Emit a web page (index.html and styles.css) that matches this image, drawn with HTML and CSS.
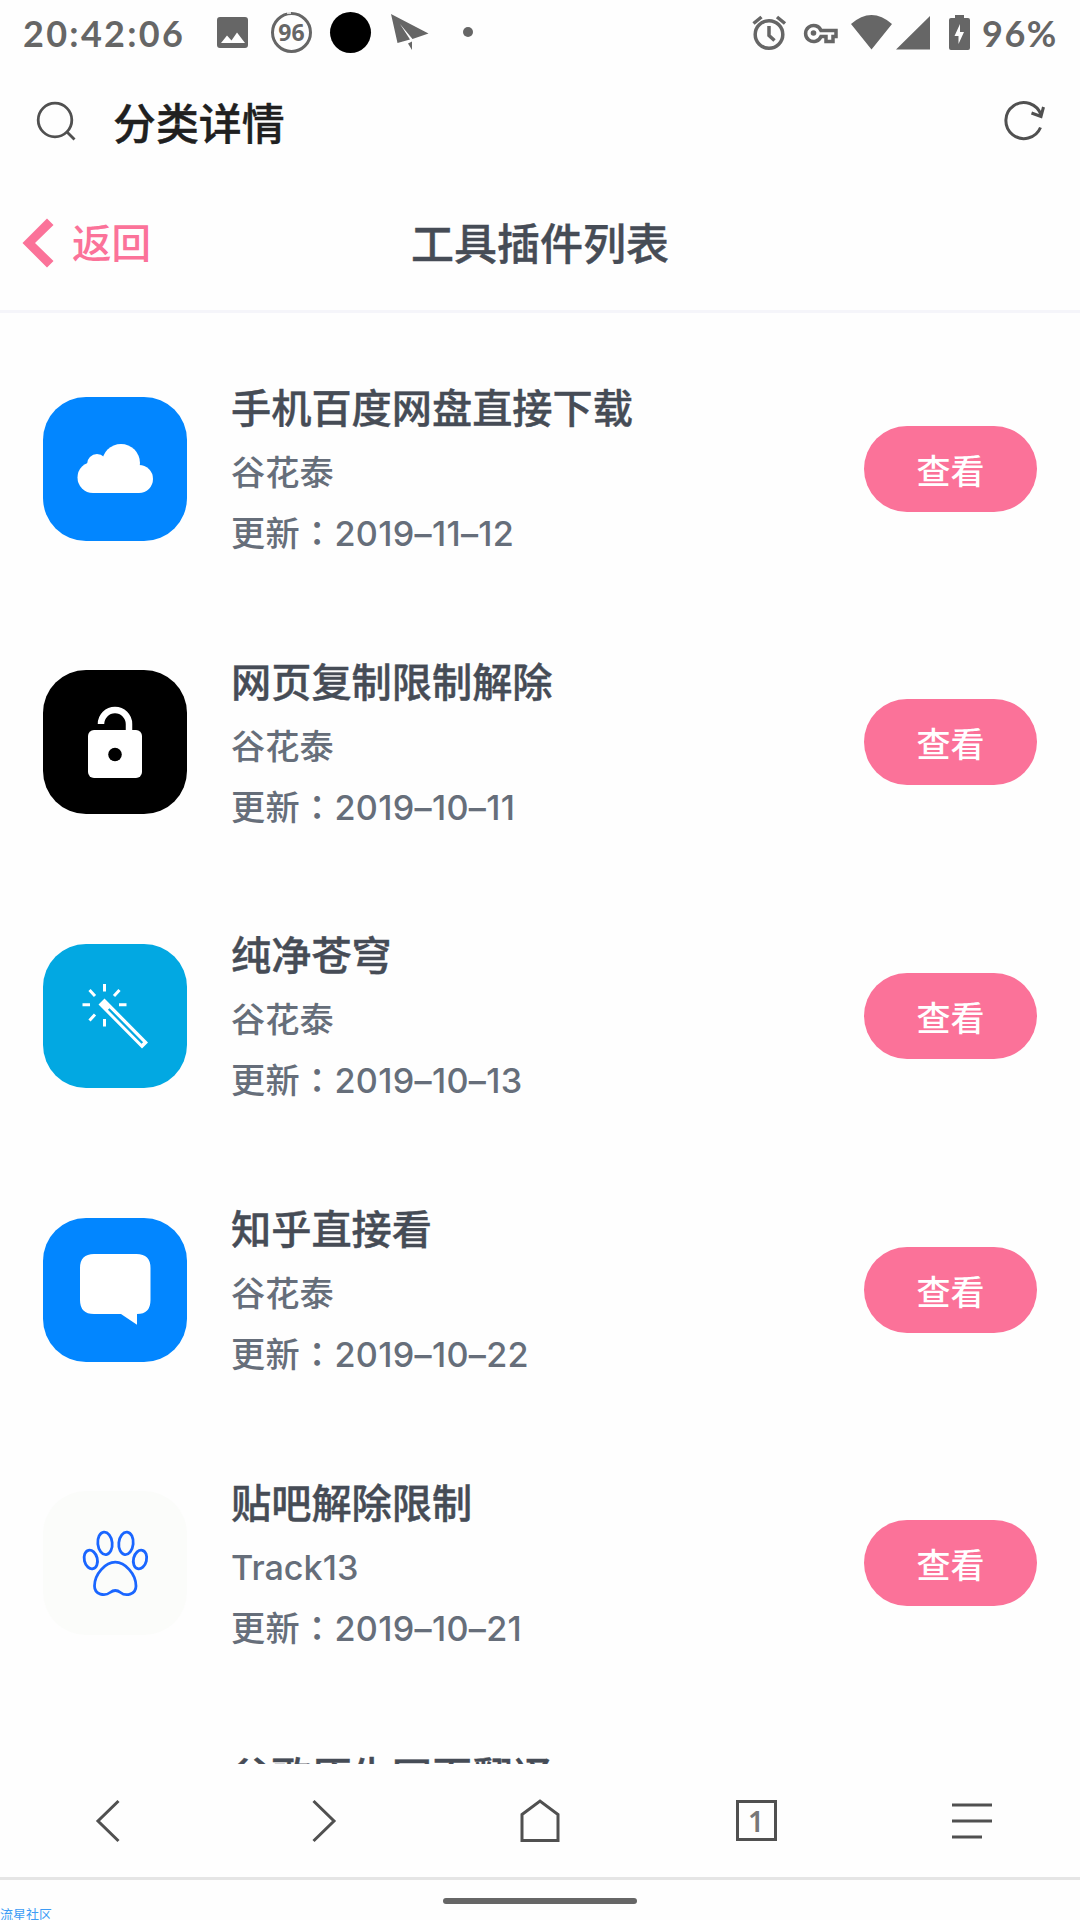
FILE: index.html
```html
<!DOCTYPE html>
<html lang="zh-CN">
  <head>
    <meta charset="utf-8" />
    <title>分类详情</title>
    <link rel="stylesheet" href="styles.css">
  </head>
  <body>
    <div class="status">
      <span class="status-time">20:42:06</span>
      <svg class="status-icons" width="260" height="56" viewBox="215 4 260 56">
        <path fill="#666" fill-rule="evenodd" d="M220 17h25q3 0 3 3v25q0 3-3 3h-25q-3 0-3-3V20q0-3 3-3zM221 43h24l-8-10.500-5.500 8-4.500-5z" />
        <circle cx="291.500" cy="32.500" r="19" fill="none" stroke="#666" stroke-width="3" />
        <path d="M287 13h4" stroke="#fefefe" stroke-width="1.500" />
        <text class="status-badge" x="291.500" y="41" text-anchor="middle">96</text>
        <circle cx="350.500" cy="32.500" r="20.500" />
        <path fill="#666" d="M391 14l37.500 19.500-16 5.500L400 24l10 15.500-12.500 3.500zM408 43.500l4-2V50z" />
        <circle cx="468" cy="32" r="5" fill="#666" />
      </svg>
      <svg class="status-signal" width="222" height="56" viewBox="750 4 222 56">
        <g fill="none" stroke="#666" stroke-width="3.500">
          <circle cx="769" cy="34.500" r="13.800" />
          <path d="M769 26v9.500l5.500 5M753.500 23.500l8-6.500M785 23.500l-8-6.500" />
          <path d="M821 30.500h15v6h-3v5h-7v-5h-5a8 8 0 1 1 0-6z" />
        </g>
        <circle cx="813.500" cy="33" r="2.800" fill="#666" />
        <path fill="#666" d="M851 24q20.500-18 41 0l-20.500 25.500zM896 49.500L930 16v33.500z" />
        <path fill="#666" fill-rule="evenodd" d="M955 15h9v3h4q2 0 2 2v28q0 2-2 2h-17q-2 0-2-2V20q0-2 2-2h4zM960 24l-5.500 12h4v8l5.500-12h-4z" />
      </svg>
      <span class="status-percent">96%</span>
    </div>

    <div class="search">
      <svg width="44" height="44" viewBox="35 99 44 44">
        <g fill="none" stroke="#505050" stroke-width="2.800">
          <circle cx="55" cy="120" r="16.800" />
          <path d="M67 132l7.500 7.500" />
        </g>
      </svg>
      <div class="search-title">分类详情</div>
      <svg width="48" height="44" viewBox="1000 99 48 44">
        <path d="M1040.500 127.500A18 18 0 1 1 1041 115M1031.500 113l9.500 3.500 2.500-9.500" fill="none" stroke="#505050" stroke-width="3" />
      </svg>
    </div>

    <div class="nav">
      <a class="back">
        <svg width="32" height="50" viewBox="0 0 32 50">
          <path fill="#fb7299" d="M25 .5l6.500 6.500L13 25l18.500 18L25 49.500.5 25z" />
        </svg>
        <span>返回</span>
      </a>
      <h1 class="nav-title">工具插件列表</h1>
    </div>

    <div class="list">
      <div class="item">
        <svg class="icon icon_blue" viewBox="0 0 144 144">
          <g fill="#fff">
            <circle cx="78" cy="66" r="19" />
            <circle cx="54" cy="67" r="10" />
            <circle cx="50" cy="80.500" r="15.500" />
            <circle cx="96" cy="82" r="14" />
            <path d="M50 70h46v26H50z" />
          </g>
        </svg>
        <div class="info">
          <div class="name">手机百度网盘直接下载</div>
          <div class="author">谷花泰</div>
          <div class="date">更新<span class="colon" lang="zh-TW">：</span>2019–11–12</div>
        </div>
        <a class="button">查看</a>
      </div>

      <div class="item">
        <svg class="icon icon_black" viewBox="0 0 144 144">
          <path d="M58 54a14 14 0 0 1 28 0v8" fill="none" stroke="#fff" stroke-width="6.500" />
          <rect x="45" y="60" width="54" height="48" rx="6" fill="#fff" />
          <circle cx="72" cy="84.500" r="6.800" />
        </svg>
        <div class="info">
          <div class="name">网页复制限制解除</div>
          <div class="author">谷花泰</div>
          <div class="date">更新<span class="colon" lang="zh-TW">：</span>2019–10–11</div>
        </div>
        <a class="button">查看</a>
      </div>

      <div class="item">
        <svg class="icon icon_sky" viewBox="0 0 144 144">
          <path d="M61.500 40v7.500M61.500 75v7.500M39.500 60.700H47M76 60.700h7.500M46.500 46l5.500 6M76.500 46L71 52M46.500 76.500l5.500-6" stroke="#fff" stroke-width="3" />
          <path fill="#fff" fill-rule="evenodd" d="M61.500 54.500l43.500 44-6 6-43.500-44zM66.500 64.200l-1.600 1.600 33.600 34 1.600-1.600z" />
        </svg>
        <div class="info">
          <div class="name">纯净苍穹</div>
          <div class="author">谷花泰</div>
          <div class="date">更新<span class="colon" lang="zh-TW">：</span>2019–10–13</div>
        </div>
        <a class="button">查看</a>
      </div>

      <div class="item">
        <svg class="icon icon_blue" viewBox="0 0 144 144">
          <path fill="#fff" d="M51 36h42.500q14 0 14 14v32q0 14-13.500 14v10.700L78 96H51q-14 0-14-14V50q0-14 14-14z" />
        </svg>
        <div class="info">
          <div class="name">知乎直接看</div>
          <div class="author">谷花泰</div>
          <div class="date">更新<span class="colon" lang="zh-TW">：</span>2019–10–22</div>
        </div>
        <a class="button">查看</a>
      </div>

      <div class="item">
        <svg class="icon icon_light" viewBox="0 0 144 144">
          <g fill="none" stroke="#1a66ff" stroke-width="2.800">
            <ellipse cx="62" cy="52.300" rx="7.200" ry="11.300" transform="rotate(-6 62 52.300)" />
            <ellipse cx="83" cy="52.300" rx="7.200" ry="11.300" transform="rotate(6 83 52.300)" />
            <ellipse cx="47.800" cy="68.500" rx="6.500" ry="9.500" transform="rotate(-14 47.800 68.500)" />
            <ellipse cx="97" cy="68.500" rx="6.500" ry="9.500" transform="rotate(14 97 68.500)" />
            <path d="M72.300 71.200C82 71.200 93 83 93 95c0 9-10.500 10.500-15.500 6.500q-5.200-4-10.400 0C62 105.500 51.500 104 51.500 95c0-12 11-23.800 20.800-23.800z" />
          </g>
        </svg>
        <div class="info">
          <div class="name">贴吧解除限制</div>
          <div class="author">Track13</div>
          <div class="date">更新<span class="colon" lang="zh-TW">：</span>2019–10–21</div>
        </div>
        <a class="button">查看</a>
      </div>

      <div class="item item_last">
        <div class="icon"></div>
        <div class="info">
          <div class="name">谷歌原生网页翻译</div>
        </div>
      </div>
    </div>

    <div class="toolbar">
      <div class="tool">
        <svg viewBox="0 0 48 48">
          <path d="M34.500 4L14 24l20.500 20" />
        </svg>
      </div>
      <div class="tool">
        <svg viewBox="0 0 48 48">
          <path d="M13.500 4L34 24 13.500 44" />
        </svg>
      </div>
      <div class="tool">
        <svg viewBox="0 0 48 48">
          <path d="M6 17.500L24 4l18 13.500v26H6z" />
        </svg>
      </div>
      <div class="tool">
        <div class="tabs">1</div>
      </div>
      <div class="tool">
        <svg viewBox="0 0 48 48">
          <path d="M4 8h40M4 24h40M4 40h30" />
        </svg>
      </div>
    </div>
    <div class="home">
      <div class="home-pill"></div>
      <div class="watermark">流星社区</div>
    </div>
  </body>
</html>
```
FILE: styles.css
```css
* {
  box-sizing: border-box;
}

body {
  margin: 0;
  height: 1920px;
  display: flex;
  flex-direction: column;
  overflow: hidden;
  background: #fefefe;
  font-family: Inter, "Noto Sans CJK SC", sans-serif;
}

svg {
  display: block;
  flex-shrink: 0;
}

/* status bar */

.status {
  height: 64px;
  padding: 2px 0 0 23px;
  display: flex;
  align-items: center;
  font-family: Lato, sans-serif;
  font-size: 36px;
  font-weight: bold;
  color: #666666;
}

.status-icons,
.status-signal {
  margin-top: -2px;
}

.status-time {
  width: 192px;
  letter-spacing: 2.300px;
  white-space: nowrap;
}

.status-badge {
  font-family: "Open Sans", sans-serif;
  font-size: 23px;
  font-weight: bold;
  fill: #666666;
}

.status-signal {
  margin-left: 275px;
}

.status-percent {
  margin-left: 10px;
  letter-spacing: 1.500px;
}

/* address bar */

.search {
  height: 116px;
  padding: 0 32px 0 35px;
  display: flex;
  align-items: center;
}

.search svg {
  margin-top: -2px;
}

.search-title {
  flex: 1;
  margin: 4px 0 0 34px;
  font-size: 42.900px;
  font-weight: 500;
  line-height: 60px;
  color: #202020;
  -webkit-text-stroke: 0.4px #202020;
}

/* page header */

.nav {
  height: 133px;
  padding-left: 22px;
  padding-bottom: 5px;
  display: flex;
  align-items: center;
  border-bottom: 3px solid #f5f5fa;
}

.back {
  width: 389px;
  display: flex;
  align-items: center;
  gap: 18px;
  font-size: 39.500px;
  font-weight: 500;
  line-height: 56px;
  color: #fb7299;
}

.back span {
  padding-top: 2px;
}

.nav-title {
  margin: 2px 0 0;
  font-size: 43px;
  font-weight: 500;
  line-height: 60px;
  color: #464c56;
  -webkit-text-stroke: 0.4px #464c56;
}

/* plugin list */

.list {
  height: 1451px;
  padding-top: 19px;
  overflow: hidden;
}

.item {
  height: 273.600px;
  padding: 0 43px;
  display: flex;
  align-items: center;
}

.item_last {
  align-items: flex-start;
  padding-top: 46px;
}

.icon {
  width: 144px;
  height: 144px;
  border-radius: 43px;
}

.icon_blue {
  background: #0286ff;
}

.icon_black {
  background: #000000;
}

.icon_sky {
  background: #02a8e2;
}

.icon_light {
  background: #fbfcfa;
}

.info {
  flex: 1;
  margin-left: 44px;
  font-size: 34.200px;
  font-weight: 500;
  color: #666e7a;
}

.name {
  font-size: 40.200px;
  font-weight: 500;
  line-height: 62px;
  color: #464c56;
  -webkit-text-stroke: 0.4px #464c56;
}

.author {
  line-height: 66px;
}

.date {
  line-height: 51px;
  letter-spacing: 0.3px;
}

.colon {
  font-family: "Noto Sans CJK TC", sans-serif;
}

.button {
  width: 173px;
  height: 86px;
  border-radius: 43px;
  background: #fb7299;
  font-size: 34px;
  font-weight: 500;
  line-height: 91px;
  text-align: center;
  color: #ffffff;
}

/* browser toolbar */

.toolbar {
  height: 116px;
  display: flex;
  border-bottom: 3px solid #e5e5e5;
}

.tool {
  flex: 1;
  display: flex;
  align-items: center;
  justify-content: center;
}

.tool svg {
  width: 48px;
  height: 48px;
  fill: none;
  stroke: #505050;
  stroke-width: 3;
}

.tabs {
  width: 41px;
  height: 41px;
  border: 3px solid #505050;
  font-family: "Noto Sans", sans-serif;
  font-size: 28px;
  font-weight: 600;
  line-height: 37px;
  text-align: center;
  color: #777777;
}

.home {
  position: relative;
  height: 40px;
  padding-top: 18px;
}

.home-pill {
  width: 194px;
  height: 6px;
  margin: 0 auto;
  border-radius: 3px;
  background: #666666;
}

.watermark {
  position: absolute;
  left: 0;
  bottom: -2px;
  font-size: 13px;
  line-height: 16px;
  color: #3d9cf5;
}
```
